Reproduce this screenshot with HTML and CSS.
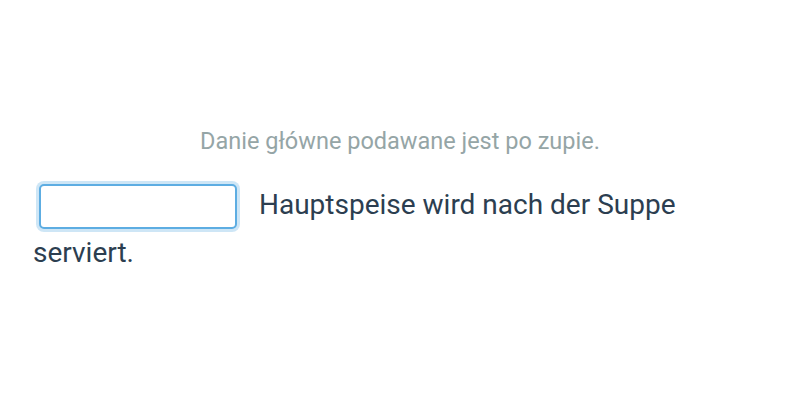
FILE: index.html
```html
<!DOCTYPE html>
<html lang="en">
<head>
    <meta charset="UTF-8">
    <meta name="viewport" content="width=device-width, initial-scale=1.0">
    <title>Übersetzung</title>
    <link rel="stylesheet" href="styles.css">
</head>
<body>
    <div class="exercise">
        <p class="prompt">Danie główne podawane jest po zupie.</p>
        <p class="sentence">
            <input type="text" class="gap" aria-label="Antwort"> Hauptspeise wird nach der Suppe serviert.
        </p>
    </div>
</body>
</html>
```

FILE: styles.css
```css
body {
    font-family: 'Roboto', sans-serif;
    margin: 0;
    background: #fff;
}

.exercise {
    padding: 127px 33px 0;
}

.prompt {
    margin: 0 0 26px;
    text-align: center;
    font-size: 23.5px;
    color: #95a5a6;
}

.sentence {
    margin: 0;
    font-size: 28px;
    line-height: 48px;
    color: #2c3e50;
}

.gap {
    width: 198px;
    height: 45px;
    box-sizing: border-box;
    margin: 0 15px 0 6px;
    padding: 0 8px;
    border: 2px solid #5dade2;
    border-radius: 5px;
    box-shadow: 0 0 0 3px rgba(93, 173, 226, 0.3);
    font-family: inherit;
    font-size: 22px;
    vertical-align: middle;
    outline: none;
}
```
